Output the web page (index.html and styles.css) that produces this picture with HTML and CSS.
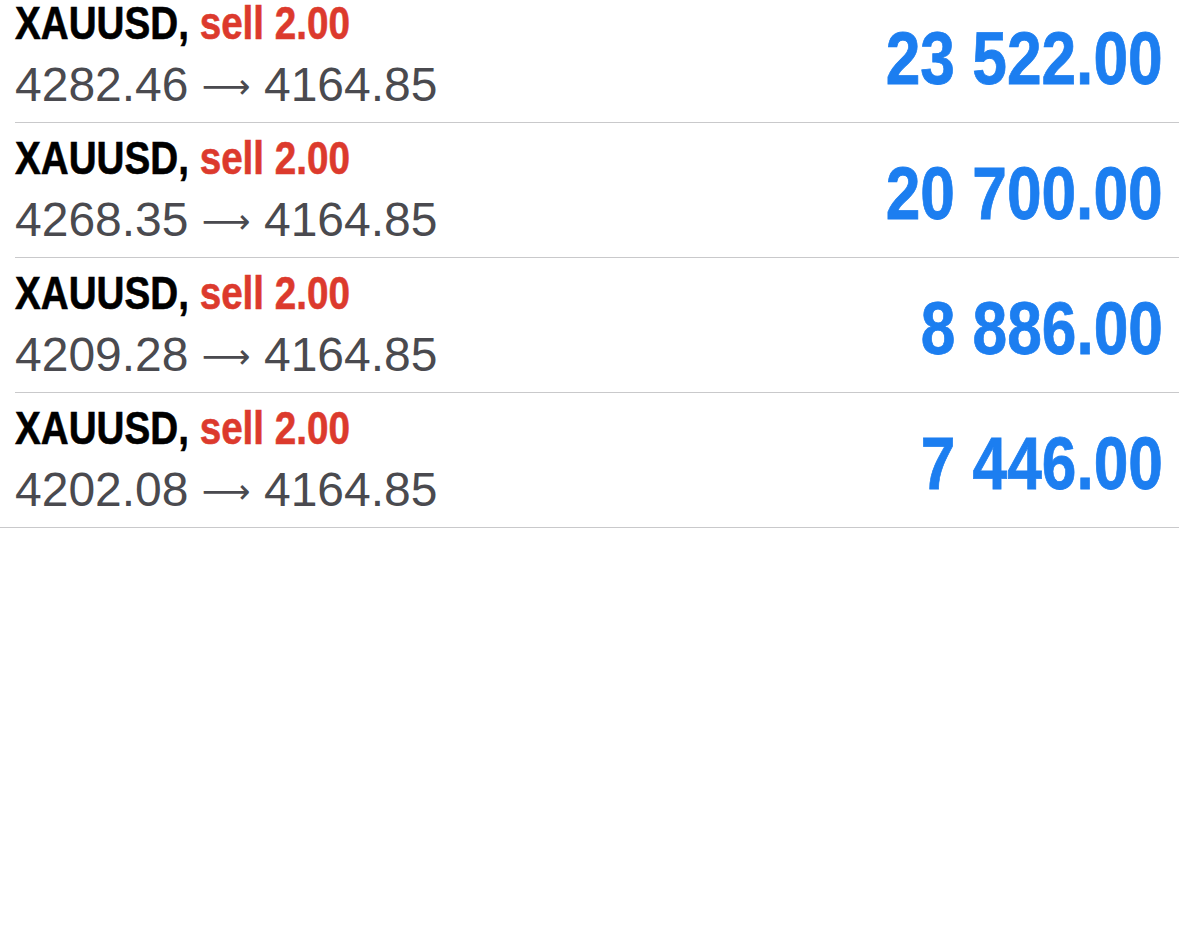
FILE: index.html
```html
<!DOCTYPE html>
<html>
<head>
<meta charset="utf-8">
<link rel="stylesheet" href="styles.css">
</head>
<body>
<div class="list">
  <div class="row">
    <div class="info">
      <div class="title"><span class="sym">XAUUSD,</span> <span class="side">sell 2.00</span></div>
      <div class="prices">4282.46 <span class="arrow">⟶</span> 4164.85</div>
    </div>
    <div class="profit">23 522.00</div>
  </div>
  <div class="row">
    <div class="info">
      <div class="title"><span class="sym">XAUUSD,</span> <span class="side">sell 2.00</span></div>
      <div class="prices">4268.35 <span class="arrow">⟶</span> 4164.85</div>
    </div>
    <div class="profit">20 700.00</div>
  </div>
  <div class="row">
    <div class="info">
      <div class="title"><span class="sym">XAUUSD,</span> <span class="side">sell 2.00</span></div>
      <div class="prices">4209.28 <span class="arrow">⟶</span> 4164.85</div>
    </div>
    <div class="profit">8 886.00</div>
  </div>
  <div class="row last">
    <div class="info">
      <div class="title"><span class="sym">XAUUSD,</span> <span class="side">sell 2.00</span></div>
      <div class="prices">4202.08 <span class="arrow">⟶</span> 4164.85</div>
    </div>
    <div class="profit">7 446.00</div>
  </div>
</div>
</body>
</html>
```
FILE: styles.css
```css
html, body {
  margin: 0;
  padding: 0;
  background: #ffffff;
}
body {
  font-family: "Liberation Sans", Arial, sans-serif;
  overflow: hidden;
}
.list {
  margin-top: -12px;
}
.row {
  display: flex;
  align-items: center;
  justify-content: space-between;
  height: 135px;
  box-sizing: border-box;
  margin-left: 15px;
  padding-right: 16px;
  border-bottom: 1px solid #c9c9cb;
}
.row.last {
  margin-left: 0;
  padding-left: 15px;
}
.info {
  align-self: flex-start;
  padding-top: 7px;
}
.title {
  font-family: "Liberation Sans", Arial, sans-serif;
  font-weight: bold;
  font-size: 46px;
  line-height: 56px;
  white-space: nowrap;
  transform: scaleX(0.84);
  transform-origin: left center;
  -webkit-text-stroke: 0.6px currentColor;
}
.sym {
  color: #000000;
}
.side {
  color: #dc3a2d;
}
.prices {
  font-size: 48px;
  line-height: 67px;
  color: #4a4a4f;
  white-space: nowrap;
}
.arrow {
  font-family: "DejaVu Sans", sans-serif;
  font-size: 34px;
  color: #4a4a4f;
  vertical-align: 3px;
}
.profit {
  font-family: "Liberation Sans", Arial, sans-serif;
  font-weight: bold;
  font-size: 75px;
  color: #1c7ef0;
  margin-top: 5px;
  white-space: nowrap;
  transform: scaleX(0.83);
  transform-origin: right center;
  -webkit-text-stroke: 0.8px currentColor;
}
```
